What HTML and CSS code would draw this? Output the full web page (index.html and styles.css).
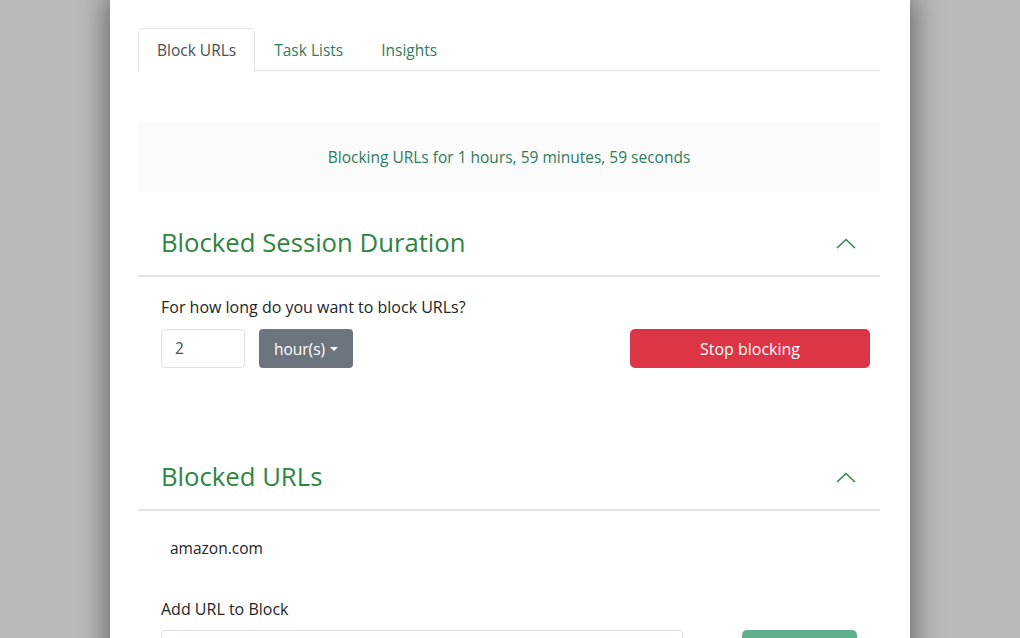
FILE: index.html
```html
<!DOCTYPE html>
<html>
<head>
<meta charset="utf-8">
<link rel="stylesheet" href="styles.css">
</head>
<body>
<div class="panel">
  <nav class="tabs">
    <div class="tab active">Block URLs</div>
    <div class="tab">Task Lists</div>
    <div class="tab">Insights</div>
  </nav>

  <div class="status">Blocking URLs for 1 hours, 59 minutes, 59 seconds</div>

  <section class="section first">
    <header class="section-head">
      <h2>Blocked Session Duration</h2>
      <svg class="chev" width="20" height="11" viewBox="0 0 20 11"><path d="M1 10 L10 1.5 L19 10" fill="none" stroke="#2e8b4a" stroke-width="1.6"/></svg>
    </header>
    <div class="section-body">
      <div class="label">For how long do you want to block URLs?</div>
      <div class="row">
        <div class="controls">
          <div class="input small">2</div>
          <div class="dropdown">hour(s)<span class="caret"></span></div>
        </div>
        <div class="btn-stop">Stop blocking</div>
      </div>
    </div>
  </section>

  <section class="section second">
    <header class="section-head">
      <h2>Blocked URLs</h2>
      <svg class="chev" width="20" height="11" viewBox="0 0 20 11"><path d="M1 10 L10 1.5 L19 10" fill="none" stroke="#2e8b4a" stroke-width="1.6"/></svg>
    </header>
    <div class="section-body">
      <div class="url">amazon.com</div>
      <div class="label add">Add URL to Block</div>
      <div class="row add-row">
        <div class="input wide"></div>
        <div class="btn-add"></div>
      </div>
    </div>
  </section>
</div>
</body>
</html>
```

FILE: styles.css
```css
html, body {
  margin: 0;
  padding: 0;
  height: 100%;
  overflow: hidden;
}
body {
  background: #bababa;
  font-family: "Open Sans", "Noto Sans", sans-serif;
  color: #212529;
}
.panel {
  width: 742px;
  margin: 0 auto;
  height: 100%;
  background: #fff;
  padding: 28px 30px 0 28px;
  box-sizing: content-box;
  box-shadow: 0 0 26px 5px rgba(0,0,0,0.42);
}
.tabs {
  display: flex;
  border-bottom: 1px solid #e3e6e8;
  height: 42px;
}
.tab {
  height: 42px;
  line-height: 42px;
  padding: 0 18px;
  font-size: 15.5px;
  color: #2f7c5c;
  border: 1px solid transparent;
  border-bottom: none;
  border-radius: 5px 5px 0 0;
}
.tab.active {
  color: #495057;
  border-color: #e3e6e8;
  background: #fff;
  height: 43px;
  margin-bottom: -1px;
}
.status {
  margin-top: 51px;
  height: 70px;
  background: #fbfbfb;
  display: flex;
  align-items: center;
  justify-content: center;
  font-size: 15.5px;
  color: #2f7c5c;
}
.section-head {
  display: flex;
  align-items: center;
  justify-content: space-between;
  padding: 0 24px 15px 23px;
  border-bottom: 2px solid #e4e4e4;
}
.section.first .section-head { margin-top: 34px; }
.section.second .section-head { margin-top: 92px; }
.section-head h2 {
  margin: 0;
  font-weight: 400;
  font-size: 25.7px;
  line-height: 34px;
  color: #2e8540;
}
.chev { display: block; }
.section-body {
  padding: 0 10px 0 23px;
}
.first .section-body { padding-top: 18px; }
.label {
  font-size: 16px;
  line-height: 24px;
  color: #212529;
  margin-bottom: 10px;
}
.row {
  display: flex;
  justify-content: space-between;
  align-items: center;
}
.controls {
  display: flex;
  gap: 14px;
}
.input {
  height: 39px;
  box-sizing: border-box;
  border: 1px solid #dee2e6;
  border-radius: 4px;
  background: #fff;
  font-size: 15.5px;
  line-height: 37px;
  padding-left: 13px;
  color: #495057;
}
.input.small { width: 84px; }
.input.wide { width: 522px; }
.dropdown {
  width: 94px;
  height: 39px;
  box-sizing: border-box;
  background: #6c757d;
  border-radius: 4px;
  color: #fff;
  font-size: 15.5px;
  display: flex;
  align-items: center;
  justify-content: center;
  gap: 5px;
}
.caret {
  width: 0;
  height: 0;
  border-left: 4px solid transparent;
  border-right: 4px solid transparent;
  border-top: 4px solid #fff;
}
.btn-stop {
  width: 240px;
  height: 39px;
  background: #dc3545;
  border-radius: 5px;
  color: #fff;
  font-size: 16px;
  display: flex;
  align-items: center;
  justify-content: center;
}
.url {
  margin-top: 25px;
  padding-left: 9px;
  font-size: 15.5px;
  line-height: 24px;
}
.label.add {
  margin-top: 37px;
  margin-bottom: 9px;
}
.add-row {
  justify-content: flex-start;
}
.btn-add {
  margin-left: 59px;
  width: 115px;
  height: 39px;
  background: #5fb08a;
  border-radius: 5px;
}
```
